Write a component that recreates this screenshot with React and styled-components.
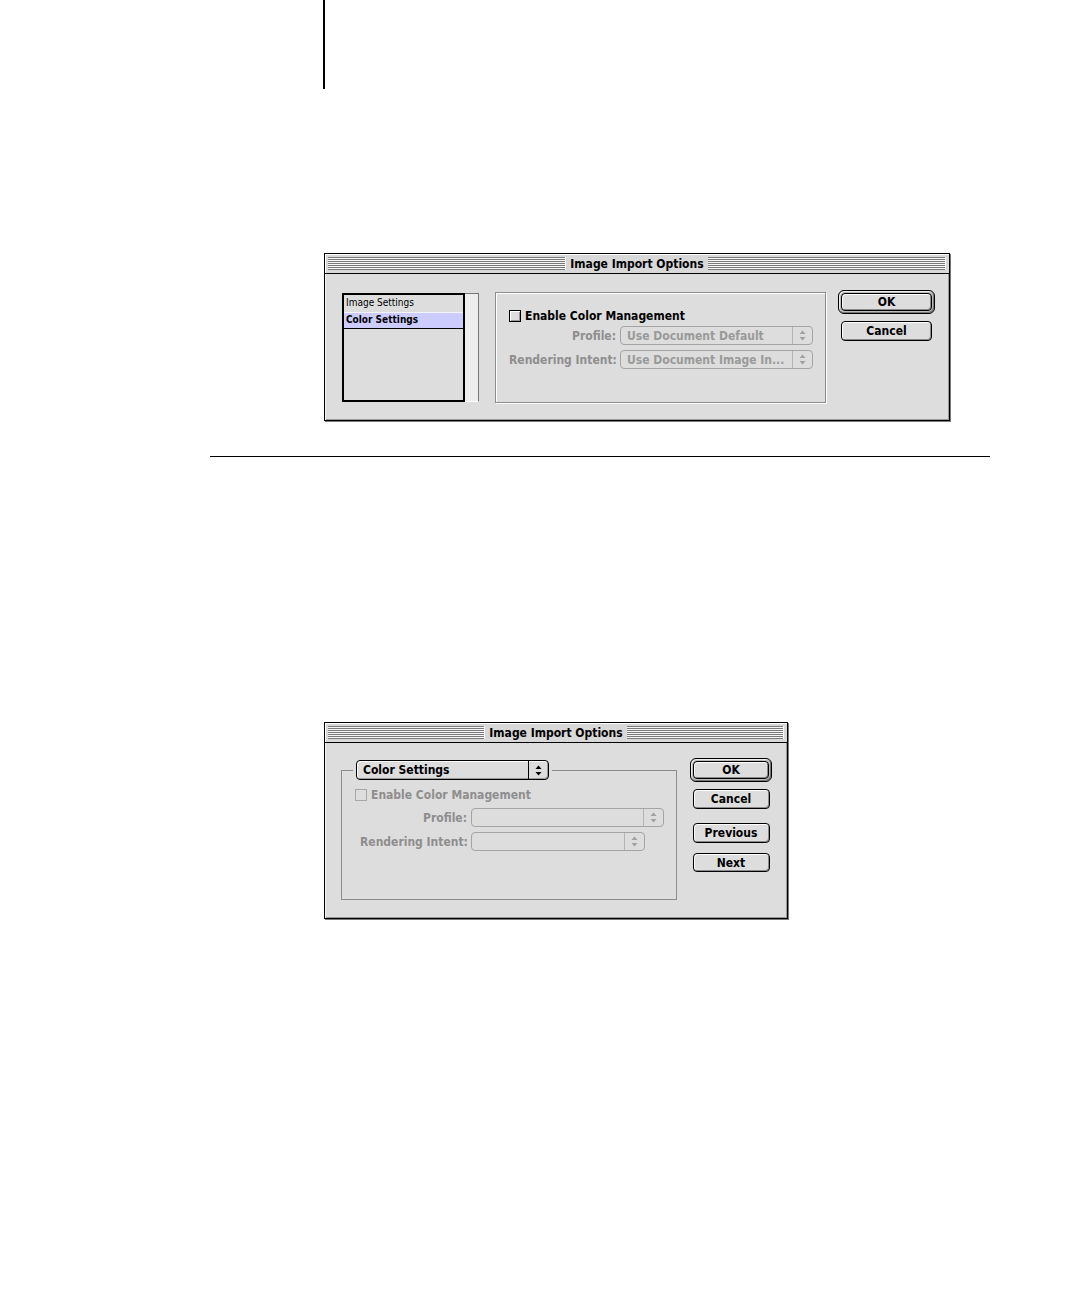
import React from "react";
import styled, { createGlobalStyle } from "styled-components";

const GlobalStyle = createGlobalStyle`
  html, body {
    margin: 0;
    padding: 0;
    background: #ffffff;
  }
  body {
    font-family: "DejaVu Sans Condensed", "DejaVu Sans", sans-serif;
  }
`;

const Page = styled.div`
  width: 1080px;
  height: 1296px;
  display: flex;
  flex-direction: column;
  overflow: hidden;
`;

const PageMark = styled.div`
  margin-left: 323px;
  width: 2px;
  height: 89px;
  background: #000;
  flex: none;
`;

const Rule = styled.div`
  margin: 35px 0 0 210px;
  width: 780px;
  height: 1px;
  background: #000;
  flex: none;
`;

const Window = styled.div`
  box-sizing: border-box;
  margin: ${(p) => p.$top}px 0 0 324px;
  width: ${(p) => p.$width}px;
  height: ${(p) => p.$height}px;
  border: 1px solid #000;
  background: #dddddd;
  box-shadow: inset 1px 1px 0 #f4f4f4, inset -1px -1px 0 #999, 1px 1px 0 #777;
  display: flex;
  flex-direction: column;
  flex: none;
`;

const TitleBar = styled.div`
  height: 19px;
  border-bottom: 1px solid #000;
  display: flex;
  align-items: center;
  padding: 0 3px;
  background: #d8d8d8;
  box-shadow: inset 1px 1px 0 #fff;
`;

const Stripes = styled.div`
  flex: 1;
  height: 13px;
  background: repeating-linear-gradient(
    to bottom,
    #7a7a7a 0,
    #7a7a7a 1px,
    #f6f6f6 1px,
    #f6f6f6 2px
  );
  border-right: 1px solid #f6f6f6;
`;

const TitleText = styled.span`
  padding: 0 4px;
  font-size: 12px;
  font-weight: bold;
  color: #000;
  white-space: nowrap;
`;

const Body = styled.div`
  flex: 1;
  display: flex;
  align-items: flex-start;
  padding: ${(p) => p.$pad};
  gap: ${(p) => p.$gap}px;
`;

const ListFrame = styled.div`
  margin-top: 3px;
  width: 137px;
  height: 109px;
  display: flex;
  flex: none;
  box-sizing: border-box;
`;

const List = styled.div`
  flex: 1;
  border: 2px solid #000;
  background: #dddddd;
  display: flex;
  flex-direction: column;
`;

const ListItem = styled.div`
  height: 15px;
  line-height: 14px;
  padding-left: 2px;
  font-family: "DejaVu Sans Condensed", sans-serif;
  font-size: 10px;
  font-weight: ${(p) => (p.$selected ? "bold" : "normal")};
  color: #000;
  background: ${(p) => (p.$selected ? "#ccccff" : "transparent")};
  border-top: 1px solid ${(p) => (p.$selected ? "#f4f4ff" : "transparent")};
  border-bottom: 1px solid ${(p) => (p.$selected ? "#000" : "transparent")};
`;

const ScrollTrack = styled.div`
  width: 13px;
  background: #eeeeee;
  border-top: 1px solid #777;
  border-right: 1px solid #777;
  border-bottom: 1px solid #fff;
`;

const GroupBox = styled.div`
  margin-top: 2px;
  box-sizing: border-box;
  width: 331px;
  height: 111px;
  border: 1px solid #8c8c8c;
  box-shadow: 1px 1px 0 #fff, inset 1px 1px 0 #fff;
  padding: 14px 0 0 13px;
  flex: none;
  display: flex;
  flex-direction: column;
  gap: 1px;
`;

const FieldSet = styled.fieldset`
  margin: 2px 0 0;
  box-sizing: border-box;
  width: 336px;
  height: 140px;
  min-width: 0;
  border: 1px solid #8c8c8c;
  padding: 6px 0 0 13px;
  flex: none;
  display: flex;
  flex-direction: column;
  gap: 4px;
`;

const Legend = styled.legend`
  padding: 0 3px;
  margin-left: -2px;
`;

const CheckRow = styled.label`
  display: flex;
  align-items: center;
  gap: 4px;
  height: 18px;
  font-size: 12px;
  font-weight: bold;
  color: ${(p) => (p.$disabled ? "#8e8e8e" : "#000")};
`;

const Box = styled.span`
  box-sizing: border-box;
  width: 12px;
  height: 12px;
  border: 1px solid ${(p) => (p.$disabled ? "#a8a8a8" : "#000")};
  background: #dddddd;
  box-shadow: ${(p) =>
    p.$disabled ? "none" : "inset 1px 1px 0 #fff, inset -1px -1px 0 #999"};
`;

const Form = styled.div`
  display: flex;
  flex-direction: column;
  gap: 5px;
  padding-left: ${(p) => p.$indent}px;
`;

const Row = styled.div`
  display: flex;
  align-items: center;
  gap: 4px;
`;

const Label = styled.span`
  width: 107px;
  text-align: right;
  font-size: 12px;
  font-weight: bold;
  color: #8e8e8e;
  white-space: nowrap;
`;

const Popup = styled.div`
  box-sizing: border-box;
  width: ${(p) => p.$width}px;
  height: ${(p) => p.$height || 19}px;
  border: 1px solid ${(p) => (p.$disabled ? "#a4a4a4" : "#000")};
  border-radius: 4px;
  background: #dddddd;
  box-shadow: ${(p) =>
    p.$disabled ? "none" : "inset 1px 1px 0 #fff, inset -1px -1px 0 #9a9a9a"};
  display: flex;
  align-items: stretch;
  font-size: 12px;
  font-weight: bold;
  color: ${(p) => (p.$disabled ? "#9a9a9a" : "#000")};
`;

const PopupValue = styled.span`
  flex: 1;
  padding-left: 6px;
  display: flex;
  align-items: center;
  white-space: nowrap;
  overflow: hidden;
`;

const PopupArrows = styled.span`
  width: 19px;
  border-left: 1px solid ${(p) => (p.$disabled ? "#b4b4b4" : "#000")};
  display: flex;
  align-items: center;
  justify-content: center;
`;

const ButtonColumn = styled.div`
  display: flex;
  flex-direction: column;
  align-items: center;
  flex: none;
  width: ${(p) => p.$width}px;
  margin-left: ${(p) => p.$shift || 0}px;
`;

const DefaultRing = styled.div`
  box-sizing: border-box;
  width: 100%;
  height: 24px;
  border: 1px solid #000;
  border-radius: 6px;
  background: #bcbcbc;
  box-shadow: inset 1px 1px 0 #eee, inset -1px -1px 0 #777;
  padding: 2px;
  display: flex;
`;

const Button = styled.button`
  box-sizing: border-box;
  width: ${(p) => (p.$fill ? "100%" : `${p.$width}px`)};
  height: ${(p) => p.$height || 20}px;
  margin-top: ${(p) => p.$gap || 0}px;
  padding: 0;
  border: 1px solid #000;
  border-radius: 4px;
  background: #dddddd;
  box-shadow: inset 1px 1px 0 #fff, inset -1px -1px 0 #8a8a8a;
  font-family: "DejaVu Sans Condensed", "DejaVu Sans", sans-serif;
  font-size: 12px;
  font-weight: bold;
  color: #000;
  line-height: 1;
`;

function Arrows({ disabled }) {
  const c = disabled ? "#a0a0a0" : "#000";
  return (
    <svg width="7" height="11" viewBox="0 0 7 11">
      <path d="M3.5 0.5 L6.5 4 L0.5 4 Z" fill={c} />
      <path d="M0.5 7 L6.5 7 L3.5 10.5 Z" fill={c} />
    </svg>
  );
}

function PopupMenu({ width, value, disabled, height }) {
  return (
    <Popup $width={width} $disabled={disabled} $height={height}>
      <PopupValue>{value}</PopupValue>
      <PopupArrows $disabled={disabled}>
        <Arrows disabled={disabled} />
      </PopupArrows>
    </Popup>
  );
}

function TitleBarRow() {
  return (
    <TitleBar>
      <Stripes />
      <TitleText>Image Import Options</TitleText>
      <Stripes />
    </TitleBar>
  );
}

export default function App() {
  return (
    <Page>
      <GlobalStyle />
      <PageMark />

      <Window $top={164} $width={626} $height={168}>
        <TitleBarRow />
        <Body $pad="16px 15px 0 17px" $gap={16}>
          <ListFrame>
            <List>
              <ListItem>Image Settings</ListItem>
              <ListItem $selected>Color Settings</ListItem>
            </List>
            <ScrollTrack />
          </ListFrame>

          <GroupBox>
            <CheckRow>
              <Box />
              Enable Color Management
            </CheckRow>
            <Form $indent={0}>
              <Row>
                <Label>Profile:</Label>
                <PopupMenu width={193} value="Use Document Default" disabled />
              </Row>
              <Row>
                <Label>Rendering Intent:</Label>
                <PopupMenu width={193} value="Use Document Image In..." disabled />
              </Row>
            </Form>
          </GroupBox>

          <ButtonColumn $width={97} $shift={-4}>
            <DefaultRing>
              <Button $fill $height={18}>OK</Button>
            </DefaultRing>
            <Button $width={91} $gap={7}>Cancel</Button>
          </ButtonColumn>
        </Body>
      </Window>

      <Rule />

      <Window $top={265} $width={464} $height={197}>
        <TitleBarRow />
        <Body $pad="15px 15px 0 16px" $gap={13}>
          <FieldSet>
            <Legend>
              <PopupMenu width={193} height={20} value="Color Settings" />
            </Legend>
            <CheckRow $disabled>
              <Box $disabled />
              Enable Color Management
            </CheckRow>
            <Form $indent={5}>
              <Row>
                <Label>Profile:</Label>
                <PopupMenu width={193} value="" disabled />
              </Row>
              <Row>
                <Label>Rendering Intent:</Label>
                <PopupMenu width={174} value="" disabled />
              </Row>
            </Form>
          </FieldSet>

          <ButtonColumn $width={82}>
            <DefaultRing>
              <Button $fill $height={18}>OK</Button>
            </DefaultRing>
            <Button $width={77} $gap={7}>Cancel</Button>
            <Button $width={77} $gap={14}>Previous</Button>
            <Button $width={77} $height={19} $gap={10}>Next</Button>
          </ButtonColumn>
        </Body>
      </Window>
    </Page>
  );
}
